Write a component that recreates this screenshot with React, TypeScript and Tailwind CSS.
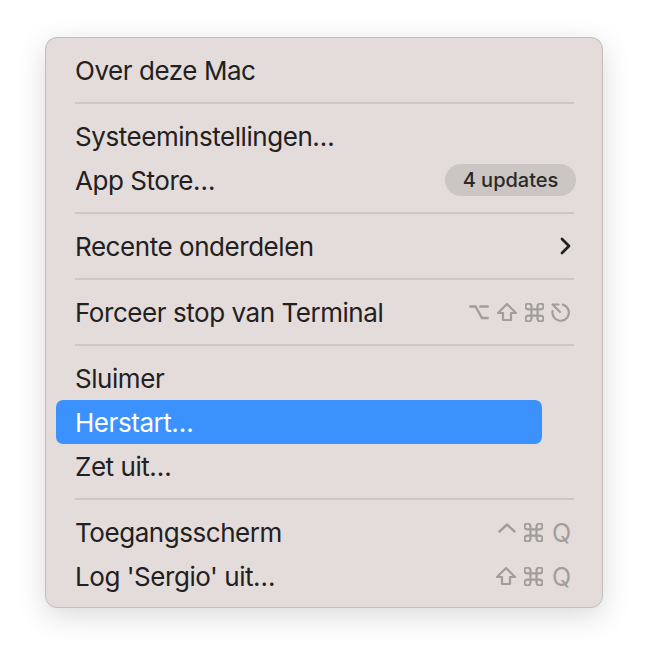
import React from "react";

const gray = "#a29d9c";

const OptionKey = () => (
  <svg width="20" height="20" viewBox="0 0 20 20" fill="none" stroke={gray} strokeWidth="2.4" strokeLinecap="square">
    <path d="M1.5 4.5H6.5L13 16H18.5M11.5 4.5H18.5" />
  </svg>
);

const ShiftKey = () => (
  <svg width="22" height="20" viewBox="0 0 22 20" fill="none" stroke={gray} strokeWidth="2.2" strokeLinejoin="round">
    <path d="M11 2L20 11H15V18H7V11H2Z" />
  </svg>
);

const CmdKey = () => (
  <svg width="19" height="19" viewBox="2.6 2.6 18.8 18.8" fill="none" stroke={gray} strokeWidth="2.2">
    <path d="M15 6v12a3 3 0 1 0 3-3H6a3 3 0 1 0 3 3V6a3 3 0 1 0-3 3h12a3 3 0 1 0-3-3" />
  </svg>
);

const EscKey = () => (
  <svg width="22" height="20" viewBox="0 0 22 20" fill="none" stroke={gray} strokeWidth="2.2" strokeLinecap="round">
    <path d="M13.8 2.6A8.2 8.2 0 1 1 3.6 9" />
    <path d="M3.5 2.5H9.5M3.5 2.5L11 10" />
  </svg>
);

const CtrlKey = () => (
  <svg width="18" height="10" viewBox="0 0 18 10" fill="none" stroke={gray} strokeWidth="2.4" strokeLinecap="round" strokeLinejoin="round">
    <path d="M1.5 8.5L9 1.5L16.5 8.5" />
  </svg>
);

const QKey = () => <span className="text-[25px] leading-none text-[#a29d9c]">Q</span>;

const Separator = () => (
  <div className="h-[22px] flex items-center ml-[29px] mr-[28px]">
    <div className="h-[2px] w-full bg-[#cdc7c6]" />
  </div>
);

interface RowProps {
  label: string;
  active?: boolean;
  children?: React.ReactNode;
}

const Row: React.FC<RowProps> = ({ label, active, children }) => (
  <div
    className={`h-[44px] ml-[10px] pl-[19px] flex items-center justify-between rounded-[7px] ${
      active ? "w-[486px] bg-[#3c92fc] text-white" : "mr-[10px] pr-[21px] text-[#222020]"
    }`}
  >
    <span className="tracking-[-0.45px]">{label}</span>
    {children}
  </div>
);

export default function App() {
  return (
    <div className="w-[648px] h-[662px] bg-white pt-[37px] pl-[45px]" style={{ fontFamily: "Inter, 'Noto Sans', sans-serif" }}>
      <div className="w-[558px] h-[571px] rounded-[12px] border border-[#c2bcbb] bg-[#e3dcdb] pt-[10px] text-[26px] shadow-[0_8px_30px_rgba(0,0,0,0.15)]">
        <Row label="Over deze Mac" />
        <Separator />
        <Row label="Systeeminstellingen…" />
        <Row label="App Store…">
          <span className="-mr-[5px] h-[32px] w-[131px] rounded-full bg-[#cbc5c3] flex items-center justify-center text-[20px] font-medium text-[#2a2828]">
            4 updates
          </span>
        </Row>
        <Separator />
        <Row label="Recente onderdelen">
          <svg width="11" height="18" viewBox="0 0 11 18" fill="none" stroke="#222020" strokeWidth="2.8" strokeLinecap="round" strokeLinejoin="round">
            <path d="M2 2L9 9L2 16" />
          </svg>
        </Row>
        <Separator />
        <Row label="Forceer stop van Terminal">
          <div className="flex items-center">
            <OptionKey />
            <div className="ml-[7px]"><ShiftKey /></div>
            <div className="ml-[7px]"><CmdKey /></div>
            <div className="ml-[5px]"><EscKey /></div>
          </div>
        </Row>
        <Separator />
        <Row label="Sluimer" />
        <Row label="Herstart…" active />
        <Row label="Zet uit…" />
        <Separator />
        <Row label="Toegangsscherm">
          <div className="flex items-center">
            <div className="-mt-[8px]"><CtrlKey /></div>
            <div className="ml-[8px]"><CmdKey /></div>
            <div className="ml-[9px]"><QKey /></div>
          </div>
        </Row>
        <Row label="Log 'Sergio' uit…">
          <div className="flex items-center">
            <ShiftKey />
            <div className="ml-[7px]"><CmdKey /></div>
            <div className="ml-[9px]"><QKey /></div>
          </div>
        </Row>
      </div>
    </div>
  );
}
